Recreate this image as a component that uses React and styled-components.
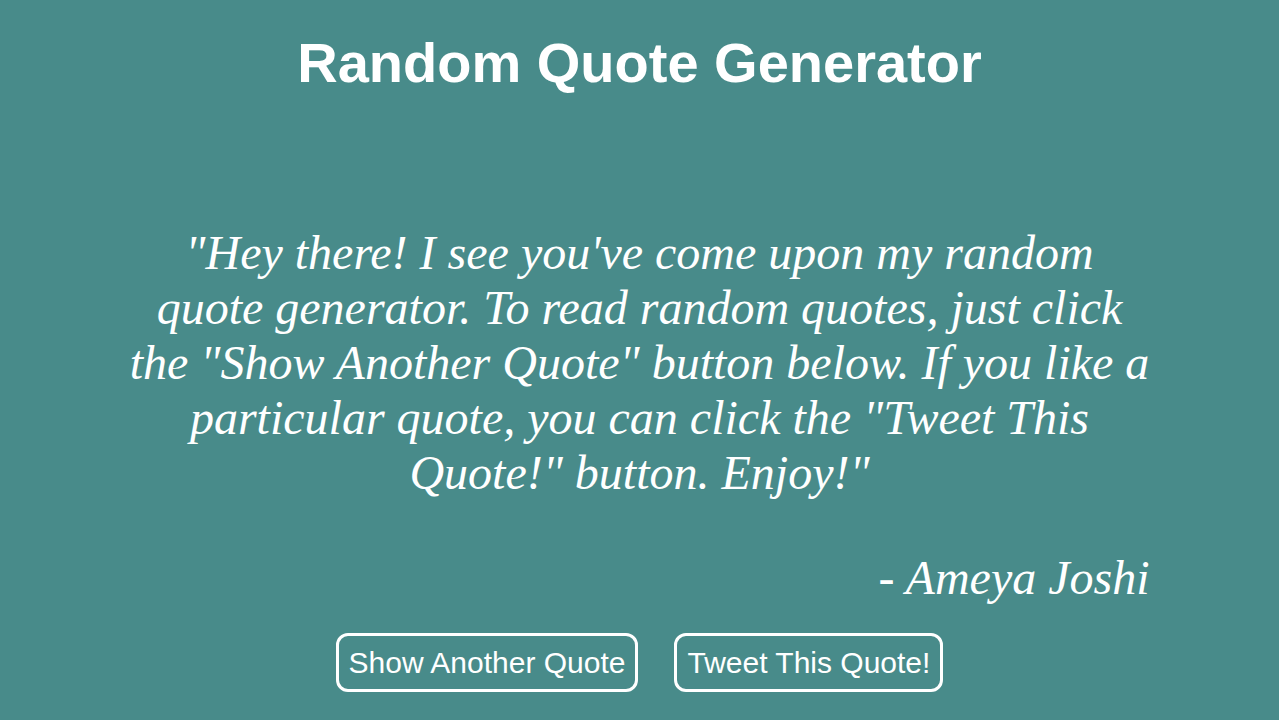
import React from 'react';
import styled, { createGlobalStyle } from 'styled-components';

const GlobalStyle = createGlobalStyle`
    html, body {
        margin: 0;
        padding: 0;
        background: #488b8a;
        color: #fff;
    }
`

const Page = styled.div`
    min-height: 720px;
    display: flex;
    flex-direction: column;
    align-items: center;
`

const Title = styled.h1`
    font-family: "Liberation Sans", Arial, sans-serif;
    font-weight: bold;
    font-size: 56px;
    margin: 30px 0 0;
    line-height: 66px;
`

const QuoteBox = styled.div`
    width: 1020px;
    margin-top: 129px;
    font-family: "Liberation Serif", "Times New Roman", serif;
    font-style: italic;
    font-size: 48px;
    line-height: 55px;
`

const QuoteText = styled.p`
    margin: 0 -20px;
    text-align: center;
    white-space: nowrap;
`

const Author = styled.p`
    margin: 50px 0 0;
    text-align: right;
`

const Buttons = styled.div`
    display: flex;
    gap: 36px;
    margin-top: 28px;
`

const Button = styled.button`
    font-family: "Liberation Sans", Arial, sans-serif;
    font-size: 30px;
    color: #fff;
    background: transparent;
    border: 3px solid #fff;
    border-radius: 12px;
    height: 59px;
    padding: 0 10px;
    cursor: pointer;
`

// the quote is split into the lines it is shown on
const lines = [
    `"Hey there! I see you've come upon my random`,
    `quote generator. To read random quotes, just click`,
    `the "Show Another Quote" button below. If you like a`,
    `particular quote, you can click the "Tweet This`,
    `Quote!" button. Enjoy!"`
];

class App extends React.Component {
    render() {
        return (
            <Page>
                <GlobalStyle />
                <Title>Random Quote Generator</Title>
                <QuoteBox>
                    <QuoteText>
                        {lines.map((line, i) => (
                            <React.Fragment key={i}>
                                {line}
                                {i < lines.length - 1 && <br />}
                            </React.Fragment>
                        ))}
                    </QuoteText>
                    <Author>- Ameya Joshi</Author>
                </QuoteBox>
                <Buttons>
                    <Button>Show Another Quote</Button>
                    <Button>Tweet This Quote!</Button>
                </Buttons>
            </Page>
        )
    }
}

export default App;
